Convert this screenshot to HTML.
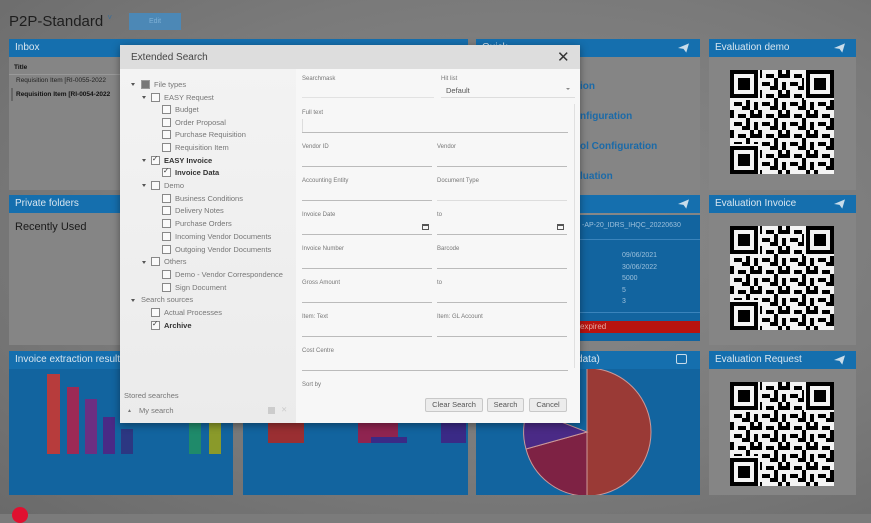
<!DOCTYPE html>
<html><head><meta charset="utf-8"><style>
*{box-sizing:border-box;margin:0;padding:0}
body{width:871px;height:514px;overflow:hidden;font-family:"Liberation Sans",sans-serif;background:#7b7b7b;position:relative}
.a{position:absolute}
.hd{position:absolute;height:18px;background:#156fae;color:#d8e6f0;font-size:10px;line-height:18px;padding-left:6px}
.gb{position:absolute;background:#858585}
.bb{position:absolute;background:#12649f}
.dlg{position:absolute;left:120px;top:45px;width:460px;height:378px;background:#f7f7f7;box-shadow:0 2px 8px rgba(0,0,0,.4)}
.tr{position:absolute;font-size:7.5px;color:#777;line-height:10px;white-space:nowrap}
.tr b{color:#333}
.cb{position:absolute;width:9px;height:9px;border:1px solid #888;background:#fafafa}
.ar{position:absolute;width:0;height:0;border-left:2.5px solid transparent;border-right:2.5px solid transparent;border-top:3px solid #555}
.lb{position:absolute;font-size:6px;color:#777}
.ln{position:absolute;height:1px;background:#bbb}
.bt{position:absolute;top:398px;height:14px;border:1px solid #c8c8c8;background:#ececec;font-size:7.5px;color:#555;text-align:center;line-height:12px;border-radius:2px}
.pl{position:absolute;right:6px;top:4px;width:11px;height:10px}
</style></head><body>
<div class="a" style="left:0;top:0;width:871px;height:514px;background:radial-gradient(ellipse at 60% 45%,#8a8a8a 0%,#7a7a7a 60%,#6a6a6a 100%)"></div>
<div class="a" style="left:9px;top:13px;font-size:15px;color:#1e1e1e">P2P-Standard <span style="font-size:8px;color:#3a6e98;vertical-align:top">˅</span></div>
<div class="a" style="left:129px;top:13px;width:52px;height:17px;background:#4c88b6;color:#7fb0d6;font-size:7px;text-align:center;line-height:17px">Edit</div>

<svg width="0" height="0" style="position:absolute"><defs>
<pattern id="qp" width="28" height="20" patternUnits="userSpaceOnUse">
<rect x="0" y="0" width="4" height="8" fill="#000"/><rect x="8" y="4" width="8" height="4" fill="#000"/><rect x="20" y="0" width="4" height="4" fill="#000"/><rect x="4" y="12" width="8" height="4" fill="#000"/><rect x="16" y="8" width="4" height="12" fill="#000"/><rect x="24" y="12" width="4" height="8" fill="#000"/><rect x="12" y="16" width="4" height="4" fill="#000"/><rect x="20" y="4" width="8" height="4" fill="#000"/>
</pattern>
<g id="qr"><rect width="104" height="104" fill="#f4f4f4"/><rect x="0" y="0" width="104" height="104" fill="url(#qp)"/>
<g fill="#f4f4f4"><rect x="0" y="0" width="30" height="30"/><rect x="74" y="0" width="30" height="30"/><rect x="0" y="74" width="30" height="30"/></g>
<g fill="none" stroke="#000" stroke-width="4"><rect x="2" y="2" width="24" height="24"/><rect x="78" y="2" width="24" height="24"/><rect x="2" y="78" width="24" height="24"/></g>
<g fill="#000"><rect x="8" y="8" width="12" height="12"/><rect x="84" y="8" width="12" height="12"/><rect x="8" y="84" width="12" height="12"/></g></g>
</defs></svg>

<!-- row1 -->
<div class="hd" style="left:9px;top:39px;width:459px">Inbox</div>
<div class="gb" style="left:9px;top:57px;width:459px;height:133px"></div>
<div class="a" style="left:14px;top:64px;font-size:6.5px;font-weight:bold;color:#111">Title</div>
<div class="a" style="left:9px;top:74px;width:459px;height:1px;background:#999"></div>
<div class="a" style="left:16px;top:77px;font-size:6.5px;color:#222">Requisition Item [RI-0055-2022</div>
<div class="a" style="left:16px;top:91px;font-size:6.5px;font-weight:bold;color:#111">Requisition Item [RI-0054-2022</div>
<div class="a" style="left:11px;top:88px;width:2px;height:13px;background:#666"></div>

<div class="hd" style="left:476px;top:39px;width:224px">Quick</div>
<svg class="pl" style="left:678px;top:43px" viewBox="0 0 12 10"><path d="M0 5L12 0L9 10L6 6Z" fill="#c8dcea"/></svg>
<div class="gb" style="left:476px;top:57px;width:224px;height:133px"></div>
<div class="a" style="left:580px;top:72px;font-size:10px;font-weight:bold;color:#1b6aa8;line-height:30px">ion<br>nfiguration<br>ol Configuration<br>luation</div>

<div class="hd" style="left:709px;top:39px;width:147px">Evaluation demo</div>
<svg class="pl" style="left:834px;top:43px" viewBox="0 0 12 10"><path d="M0 5L12 0L9 10L6 6Z" fill="#c8dcea"/></svg>
<div class="gb" style="left:709px;top:57px;width:147px;height:133px"></div>
<svg class="a" style="left:730px;top:70px" width="104" height="104"><use href="#qr"/></svg>

<!-- row2 -->
<div class="hd" style="left:9px;top:195px;width:227px">Private folders</div>
<div class="gb" style="left:9px;top:213px;width:227px;height:132px"></div>
<div class="a" style="left:15px;top:221px;font-size:11px;color:#1a1a1a">Recently Used</div>
<div class="gb" style="left:243px;top:195px;width:225px;height:150px"></div>

<div class="hd" style="left:476px;top:195px;width:224px">Invoice (demo data)</div>
<svg class="pl" style="left:678px;top:199px" viewBox="0 0 12 10"><path d="M0 5L12 0L9 10L6 6Z" fill="#c8dcea"/></svg>
<div class="bb" style="left:476px;top:215px;width:224px;height:126px"></div>
<div class="a" style="left:582px;top:222px;font-size:7px;color:#9cc0dc">-AP-20_IDRS_IHQC_20220630</div>
<div class="a" style="left:476px;top:239px;width:224px;height:1px;background:#3a84bc"></div>
<div class="a" style="left:622px;top:250px;font-size:7px;color:#9cc0dc;line-height:11.5px">09/06/2021<br>30/06/2022<br>5000<br>5<br>3</div>
<div class="a" style="left:476px;top:312px;width:224px;height:1px;background:#3a84bc"></div>
<div class="a" style="left:476px;top:321px;width:224px;height:12px;background:#b8130f;color:#e8a8a0;font-size:8px;line-height:12px;padding-left:104px">expired</div>

<div class="hd" style="left:709px;top:195px;width:147px">Evaluation Invoice</div>
<svg class="pl" style="left:834px;top:199px" viewBox="0 0 12 10"><path d="M0 5L12 0L9 10L6 6Z" fill="#c8dcea"/></svg>
<div class="gb" style="left:709px;top:213px;width:147px;height:132px"></div>
<svg class="a" style="left:730px;top:226px" width="104" height="104"><use href="#qr"/></svg>

<!-- row3 -->
<div class="hd" style="left:9px;top:351px;width:224px;font-size:10px">Invoice extraction results</div>
<div class="bb" style="left:9px;top:369px;width:224px;height:126px"></div>
<svg class="a" style="left:9px;top:369px" width="224" height="126">
<g><rect x="38" y="5" width="13" height="128" fill="#b73c3c"/><rect x="58" y="18" width="12" height="115" fill="#9c2a55"/><rect x="76" y="30" width="12" height="103" fill="#6c2f82"/><rect x="94" y="48" width="12" height="85" fill="#4a2a86"/><rect x="112" y="60" width="12" height="73" fill="#2c3782"/><rect x="180" y="50" width="12" height="83" fill="#1f8a6a"/><rect x="200" y="50" width="12" height="83" fill="#8a9a2a"/></g>
<rect x="0" y="85" width="224" height="41" fill="#12649f"/></svg>
<div class="hd" style="left:243px;top:351px;width:225px"></div>
<div class="bb" style="left:243px;top:369px;width:225px;height:126px"></div>
<svg class="a" style="left:243px;top:369px" width="225" height="126"><rect x="25" y="50" width="36" height="24" fill="#9a2f32"/><rect x="115" y="50" width="40" height="24" fill="#8f2450"/><rect x="198" y="50" width="25" height="24" fill="#3a2a86"/><rect x="128" y="68" width="36" height="6" fill="#3a2a86"/></svg>
<div class="hd" style="left:476px;top:351px;width:224px">Invoice status (demo data)</div>
<div class="a" style="left:676px;top:354px;width:11px;height:10px;border:1px solid #c8dcea;border-radius:2px"></div>
<div class="bb" style="left:476px;top:369px;width:224px;height:126px"></div>
<svg class="a" style="left:476px;top:369px" width="224" height="126">
<g stroke="#c99" stroke-width="1"><path d="M111 63L111 -1A63 63 0 0 1 111 127Z" fill="#9a3a36"/><path d="M111 63L111 127A63 63 0 0 1 50 80Z" fill="#7e2244"/><path d="M111 63L50 80A63 63 0 0 1 52 40Z" fill="#4a2a86"/></g></svg>
<div class="hd" style="left:709px;top:351px;width:147px">Evaluation Request</div>
<svg class="pl" style="left:834px;top:355px" viewBox="0 0 12 10"><path d="M0 5L12 0L9 10L6 6Z" fill="#c8dcea"/></svg>
<div class="gb" style="left:709px;top:369px;width:147px;height:126px"></div>
<svg class="a" style="left:730px;top:382px" width="104" height="104"><use href="#qr"/></svg>
<div class="a" style="left:12px;top:507px;width:16px;height:16px;border-radius:50%;background:#e01030"></div>

<!-- dialog -->
<div class="dlg">
<div class="a" style="left:0;top:0;width:460px;height:24px;background:#dddddd"></div>
<div class="a" style="left:11px;top:7px;font-size:10px;color:#444">Extended Search</div>
<div class="a" style="left:437px;top:3px;font-size:15px;color:#333">✕</div>
<div class="a" style="left:0;top:24px;width:176px;height:354px;background:linear-gradient(#f3f3f3,#ebebeb)"></div>
</div>
<div id="tree"></div>
<!-- tree (absolute page coords) -->
<div class="ar" style="left:131px;top:83px"></div><div class="cb" style="left:141px;top:80px;background:#777;border-color:#999"></div><div class="tr" style="left:154px;top:80px">File types</div>
<div class="ar" style="left:142px;top:96px"></div><div class="cb" style="left:151px;top:93px"></div><div class="tr" style="left:164px;top:93px">EASY Request</div>
<div class="cb" style="left:162px;top:105px"></div><div class="tr" style="left:175px;top:105px">Budget</div>
<div class="cb" style="left:162px;top:118px"></div><div class="tr" style="left:175px;top:118px">Order Proposal</div>
<div class="cb" style="left:162px;top:130px"></div><div class="tr" style="left:175px;top:130px">Purchase Requisition</div>
<div class="cb" style="left:162px;top:143px"></div><div class="tr" style="left:175px;top:143px">Requisition Item</div>
<div class="ar" style="left:142px;top:159px"></div><div class="cb" style="left:151px;top:156px"></div><div class="tr" style="left:152px;top:154px;color:#333">✓</div><div class="tr" style="left:164px;top:156px"><b>EASY Invoice</b></div>
<div class="cb" style="left:162px;top:168px"></div><div class="tr" style="left:163px;top:166px;color:#333">✓</div><div class="tr" style="left:175px;top:168px"><b>Invoice Data</b></div>
<div class="ar" style="left:142px;top:184px"></div><div class="cb" style="left:151px;top:181px"></div><div class="tr" style="left:164px;top:181px">Demo</div>
<div class="cb" style="left:162px;top:194px"></div><div class="tr" style="left:175px;top:194px">Business Conditions</div>
<div class="cb" style="left:162px;top:206px"></div><div class="tr" style="left:175px;top:206px">Delivery Notes</div>
<div class="cb" style="left:162px;top:219px"></div><div class="tr" style="left:175px;top:219px">Purchase Orders</div>
<div class="cb" style="left:162px;top:232px"></div><div class="tr" style="left:175px;top:232px">Incoming Vendor Documents</div>
<div class="cb" style="left:162px;top:245px"></div><div class="tr" style="left:175px;top:245px">Outgoing Vendor Documents</div>
<div class="ar" style="left:142px;top:261px"></div><div class="cb" style="left:151px;top:257px"></div><div class="tr" style="left:164px;top:257px">Others</div>
<div class="cb" style="left:162px;top:270px"></div><div class="tr" style="left:175px;top:270px">Demo - Vendor Correspondence</div>
<div class="cb" style="left:162px;top:283px"></div><div class="tr" style="left:175px;top:283px">Sign Document</div>
<div class="ar" style="left:131px;top:299px"></div><div class="tr" style="left:141px;top:295px">Search sources</div>
<div class="cb" style="left:151px;top:308px"></div><div class="tr" style="left:164px;top:308px">Actual Processes</div>
<div class="cb" style="left:151px;top:321px"></div><div class="tr" style="left:152px;top:319px;color:#333">✓</div><div class="tr" style="left:164px;top:321px"><b>Archive</b></div>
<div class="tr" style="left:124px;top:391px">Stored searches</div>
<div class="tr" style="left:127px;top:406px;font-size:5px">▲</div><div class="tr" style="left:139px;top:406px">My search</div>
<div class="a" style="left:268px;top:407px;width:7px;height:7px;background:#ccc"></div>
<div class="tr" style="left:281px;top:405px;color:#ccc">✕</div>

<!-- right form -->
<div class="lb" style="left:302px;top:76px">Searchmask</div><div class="lb" style="left:441px;top:76px">Hit list</div>
<div class="ln" style="left:302px;top:97px;width:132px;background:#e2e2e2"></div>
<div class="tr" style="left:446px;top:86px;color:#555">Default</div><div class="ln" style="left:441px;top:97px;width:134px;background:#ddd"></div>
<div class="a" style="left:566px;top:88px;border-left:2px solid transparent;border-right:2px solid transparent;border-top:2px solid #888"></div>
<div class="a" style="left:574px;top:104px;width:1px;height:264px;background:#e0e0e0"></div>
<div class="lb" style="left:302px;top:110px">Full text</div><div class="ln" style="left:302px;top:132px;width:266px"></div><div class="a" style="left:302px;top:119px;width:1px;height:13px;background:#ddd"></div>
<div class="lb" style="left:302px;top:144px">Vendor ID</div><div class="lb" style="left:437px;top:144px">Vendor</div>
<div class="ln" style="left:302px;top:166px;width:130px"></div><div class="ln" style="left:437px;top:166px;width:130px"></div>
<div class="lb" style="left:302px;top:178px">Accounting Entity</div><div class="lb" style="left:437px;top:178px">Document Type</div>
<div class="ln" style="left:302px;top:200px;width:130px"></div><div class="ln" style="left:437px;top:200px;width:130px;background:#ddd"></div>
<div class="lb" style="left:302px;top:212px">Invoice Date</div><div class="lb" style="left:437px;top:212px">to</div>
<div class="ln" style="left:302px;top:234px;width:130px"></div><div class="ln" style="left:437px;top:234px;width:130px"></div>
<div class="a" style="left:422px;top:224px;width:7px;height:6px;border:1px solid #555;border-top-width:2px"></div><div class="a" style="left:557px;top:224px;width:7px;height:6px;border:1px solid #555;border-top-width:2px"></div>
<div class="lb" style="left:302px;top:246px">Invoice Number</div><div class="lb" style="left:437px;top:246px">Barcode</div>
<div class="ln" style="left:302px;top:268px;width:130px"></div><div class="ln" style="left:437px;top:268px;width:130px"></div>
<div class="lb" style="left:302px;top:280px">Gross Amount</div><div class="lb" style="left:437px;top:280px">to</div>
<div class="ln" style="left:302px;top:302px;width:130px"></div><div class="ln" style="left:437px;top:302px;width:130px"></div>
<div class="lb" style="left:302px;top:314px">Item: Text</div><div class="lb" style="left:437px;top:314px">Item: GL Account</div>
<div class="ln" style="left:302px;top:336px;width:130px"></div><div class="ln" style="left:437px;top:336px;width:130px"></div>
<div class="lb" style="left:302px;top:348px">Cost Centre</div>
<div class="ln" style="left:302px;top:370px;width:266px"></div>
<div class="lb" style="left:302px;top:382px">Sort by</div>
<div class="bt" style="left:425px;width:58px">Clear Search</div>
<div class="bt" style="left:487px;width:37px">Search</div>
<div class="bt" style="left:529px;width:38px">Cancel</div>
</body></html>
